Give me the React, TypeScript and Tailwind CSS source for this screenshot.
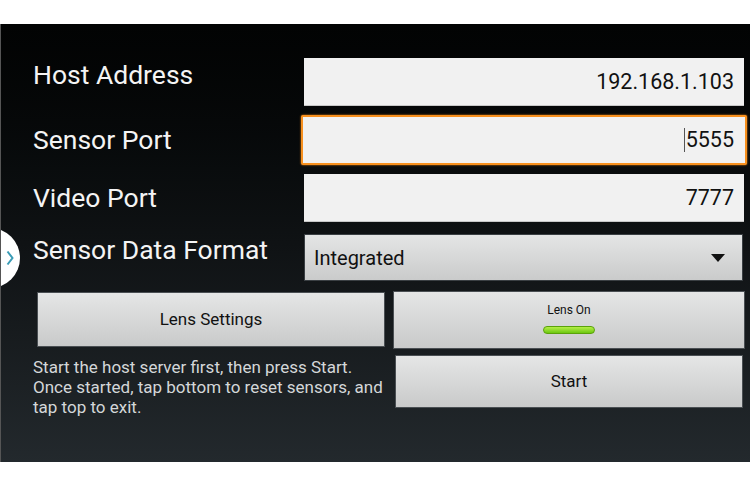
import React from 'react';

const font = { fontFamily: 'Roboto, "Noto Sans", sans-serif' };

function Field({ value, focused = false }: { value: string; focused?: boolean }) {
  if (focused) {
    return (
      <div className="ml-[-3px] mt-[-1px] flex h-[50px] w-[446px] items-center justify-end rounded-[2px] border-2 border-[#f7901e] bg-[#f1f1f1] pr-[11px] shadow-[0_0_2px_#f7901e]">
        <span className="mr-[1px] h-[24px] w-px bg-[#555]" />
        <span className="text-[21.5px] leading-none text-[#111]">{value}</span>
      </div>
    );
  }
  return (
    <div className="flex h-[48px] w-[440px] items-center justify-end border-b border-[#c8c8c8] bg-[#f1f1f1] pr-[10px]">
      <span className="text-[21.5px] leading-none text-[#111]">{value}</span>
    </div>
  );
}

function GrayButton({ className, children }: { className: string; children: React.ReactNode }) {
  return (
    <div
      className={`flex flex-col items-center justify-center border border-[#4a4f53] bg-gradient-to-b from-[#e5e6e6] to-[#c9caca] text-[#111] ${className}`}
    >
      {children}
    </div>
  );
}

export default function App() {
  return (
    <div className="h-[500px] w-[750px] bg-white pt-[24px]" style={font}>
      <div className="relative h-[438px] w-[750px] overflow-hidden border-l border-[#555] bg-gradient-to-b from-[#020303] via-[#0f1214] to-[#23292d] pt-[34px]">
        {/* side drawer handle */}
        <div className="absolute left-[-42px] top-[204px] flex h-[60px] w-[61px] items-center justify-end rounded-full bg-white pr-[6px]">
          <svg width="8" height="16" viewBox="0 0 8 16">
            <path d="M1.5 1.5 L6.5 8 L1.5 14.5" fill="none" stroke="#3a9cb6" strokeWidth="2" />
          </svg>
        </div>

        <div className="flex h-[48px] items-start">
          <div className="w-[303px] pl-[32px] pt-[2px] text-[26.5px] leading-[30px] text-[#f4f4f4]">Host Address</div>
          <Field value="192.168.1.103" />
        </div>
        <div className="mt-[10px] flex h-[48px] items-start">
          <div className="w-[303px] pl-[32px] pt-[9px] text-[26.5px] leading-[30px] text-[#f4f4f4]">Sensor Port</div>
          <Field value="5555" focused />
        </div>
        <div className="mt-[10px] flex h-[48px] items-start">
          <div className="w-[303px] pl-[32px] pt-[9px] text-[26.5px] leading-[30px] text-[#f4f4f4]">Video Port</div>
          <Field value="7777" />
        </div>
        <div className="mt-[12px] flex h-[47px] items-start">
          <div className="w-[303px] pl-[32px] pt-[1px] text-[26.5px] leading-[30px] text-[#f4f4f4]">Sensor Data Format</div>
          <div className="flex h-[47px] w-[439px] items-center justify-between border border-[#3a3f43] bg-gradient-to-b from-[#e4e5e5] to-[#cacbcb] pl-[9px] pr-[17px]">
            <span className="text-[20px] text-[#111]">Integrated</span>
            <svg width="14" height="8" viewBox="0 0 14 8">
              <path d="M0 0 H14 L7 8 Z" fill="#111" />
            </svg>
          </div>
        </div>

        <div className="mt-[10px] flex">
          <div className="w-[392px] pl-[36px]">
            <GrayButton className="mt-[1px] h-[55px] w-[348px] text-[17px]">Lens Settings</GrayButton>
            <div className="ml-[-4px] mt-[10px] whitespace-nowrap text-[17px] leading-[20px] text-[#d4d7d9]">
              Start the host server first, then press Start.
              <br />
              Once started, tap bottom to reset sensors, and
              <br />
              tap top to exit.
            </div>
          </div>
          <div>
            <GrayButton className="h-[58px] w-[352px] gap-[10px] pb-[2px]">
              <span className="text-[12px] leading-none">Lens On</span>
              <span className="h-[8px] w-[52px] rounded-[4px] border border-[#5aa20a] bg-gradient-to-b from-[#b4ee45] to-[#6cc80c]" />
            </GrayButton>
            <GrayButton className="ml-[2px] mt-[6px] h-[53px] w-[348px] text-[17px]">Start</GrayButton>
          </div>
        </div>
      </div>
    </div>
  );
}
